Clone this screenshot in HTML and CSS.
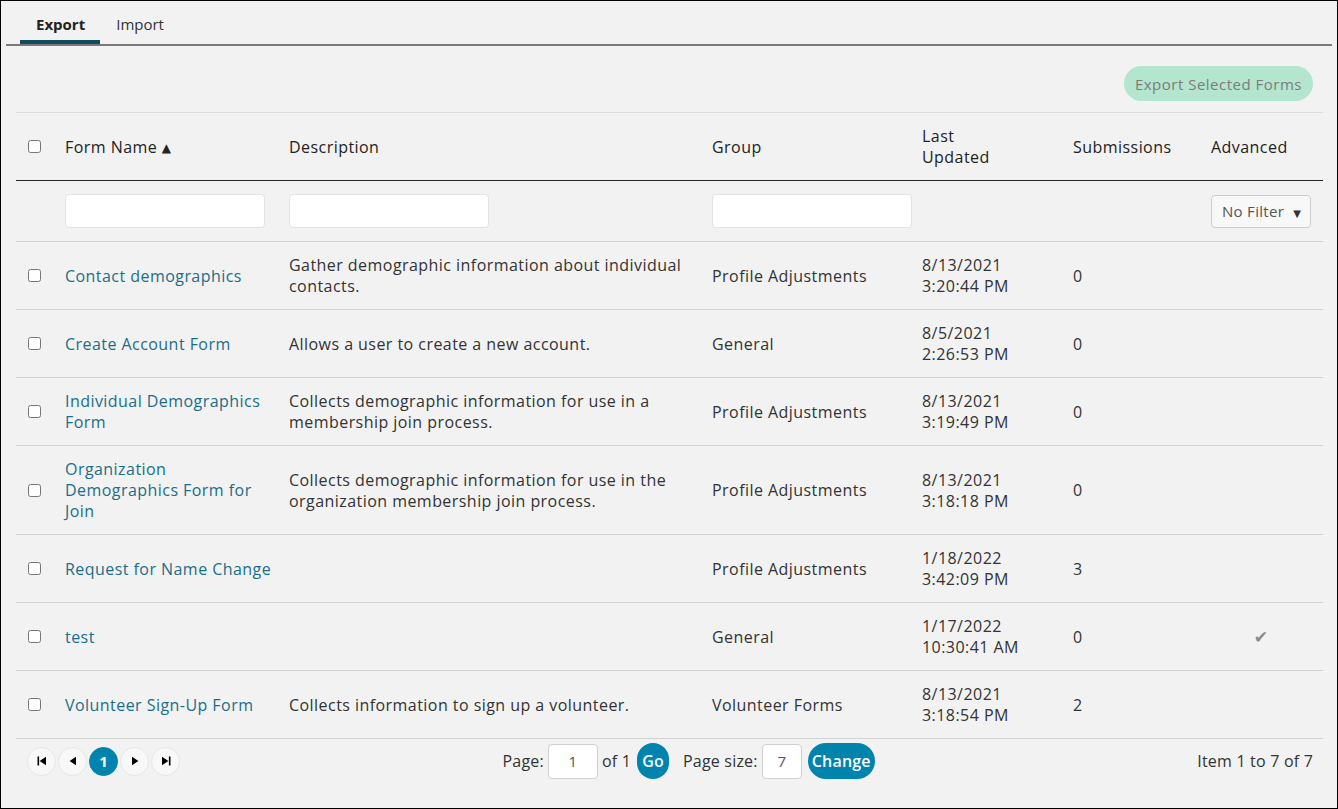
FILE: index.html
```html
<!DOCTYPE html>
<html lang="en">
<head>
    <meta charset="UTF-8">
    <meta name="viewport" content="width=device-width, initial-scale=1.0">
    <title>Forms - Export</title>
    <link rel="stylesheet" href="styles.css">
</head>
<body>
    <div class="panel">
        <div class="tabs">
            <a class="tab active" href="#">Export</a>
            <a class="tab" href="#">Import</a>
        </div>

        <div class="toolbar">
            <button class="export-button" disabled>Export Selected Forms</button>
        </div>

        <table class="grid">
            <colgroup>
                <col class="col-check">
                <col class="col-name">
                <col class="col-desc">
                <col class="col-group">
                <col class="col-updated">
                <col class="col-subs">
                <col class="col-adv">
            </colgroup>
            <thead>
                <tr class="head-row">
                    <th><input type="checkbox"></th>
                    <th>Form Name <span class="sort-arrow">&#9650;</span></th>
                    <th>Description</th>
                    <th>Group</th>
                    <th>Last<br>Updated</th>
                    <th>Submissions</th>
                    <th>Advanced</th>
                </tr>
                <tr class="filter-row">
                    <th></th>
                    <th><input type="text" class="filter-input"></th>
                    <th><input type="text" class="filter-input"></th>
                    <th><input type="text" class="filter-input"></th>
                    <th></th>
                    <th></th>
                    <th>
                        <div class="filter-select">No Filter <span class="caret">&#9660;</span></div>
                    </th>
                </tr>
            </thead>
            <tbody>
                <tr>
                    <td><input type="checkbox"></td>
                    <td><a href="#">Contact demographics</a></td>
                    <td>Gather demographic information about individual contacts.</td>
                    <td>Profile Adjustments</td>
                    <td>8/13/2021<br>3:20:44 PM</td>
                    <td>0</td>
                    <td></td>
                </tr>
                <tr>
                    <td><input type="checkbox"></td>
                    <td><a href="#">Create Account Form</a></td>
                    <td>Allows a user to create a new account.</td>
                    <td>General</td>
                    <td>8/5/2021<br>2:26:53 PM</td>
                    <td>0</td>
                    <td></td>
                </tr>
                <tr>
                    <td><input type="checkbox"></td>
                    <td><a href="#">Individual Demographics Form</a></td>
                    <td>Collects demographic information for use in a membership join process.</td>
                    <td>Profile Adjustments</td>
                    <td>8/13/2021<br>3:19:49 PM</td>
                    <td>0</td>
                    <td></td>
                </tr>
                <tr>
                    <td><input type="checkbox"></td>
                    <td><a href="#">Organization Demographics Form for Join</a></td>
                    <td>Collects demographic information for use in the organization membership join process.</td>
                    <td>Profile Adjustments</td>
                    <td>8/13/2021<br>3:18:18 PM</td>
                    <td>0</td>
                    <td></td>
                </tr>
                <tr>
                    <td><input type="checkbox"></td>
                    <td><a href="#">Request for Name Change</a></td>
                    <td></td>
                    <td>Profile Adjustments</td>
                    <td>1/18/2022<br>3:42:09 PM</td>
                    <td>3</td>
                    <td></td>
                </tr>
                <tr>
                    <td><input type="checkbox"></td>
                    <td><a href="#">test</a></td>
                    <td></td>
                    <td>General</td>
                    <td>1/17/2022<br>10:30:41 AM</td>
                    <td>0</td>
                    <td class="adv-cell"><span class="check">&#10004;</span></td>
                </tr>
                <tr>
                    <td><input type="checkbox"></td>
                    <td><a href="#">Volunteer Sign-Up Form</a></td>
                    <td>Collects information to sign up a volunteer.</td>
                    <td>Volunteer Forms</td>
                    <td>8/13/2021<br>3:18:54 PM</td>
                    <td>2</td>
                    <td></td>
                </tr>
            </tbody>
        </table>

        <div class="pager">
            <div class="pager-nav">
                <button class="page-btn" title="First">
                    <svg width="10" height="10" viewBox="0 0 10 10"><rect x="0.5" y="0.5" width="1.6" height="9" fill="#000"/><polygon points="9,0.8 9,9.2 2.6,5" fill="#000"/></svg>
                </button>
                <button class="page-btn" title="Previous">
                    <svg width="10" height="10" viewBox="0 0 10 10"><polygon points="8,0.8 8,9.2 1.6,5" fill="#000"/></svg>
                </button>
                <button class="page-btn current">1</button>
                <button class="page-btn" title="Next">
                    <svg width="10" height="10" viewBox="0 0 10 10"><polygon points="2,0.8 2,9.2 8.4,5" fill="#000"/></svg>
                </button>
                <button class="page-btn" title="Last">
                    <svg width="10" height="10" viewBox="0 0 10 10"><polygon points="1,0.8 1,9.2 7.4,5" fill="#000"/><rect x="7.9" y="0.5" width="1.6" height="9" fill="#000"/></svg>
                </button>
            </div>
            <div class="pager-jump">
                <span>Page:</span>
                <input type="text" class="page-input" value="1">
                <span>of 1</span>
                <button class="pill-button go">Go</button>
                <span class="size-label">Page size:</span>
                <input type="text" class="size-input" value="7">
                <button class="pill-button">Change</button>
            </div>
            <div class="pager-info">Item 1 to 7 of 7</div>
        </div>
    </div>
</body>
</html>
```

FILE: styles.css
```css
body {
    margin: 0;
    font-family: "Open Sans", "DejaVu Sans", sans-serif;
    font-size: 16px;
    letter-spacing: 0.45px;
    line-height: 21px;
    color: #333;
    background: #f2f2f2;
}
.panel {
    height: 807px;
    border: 1px solid #000;
    background: #f2f2f2;
}
.tabs {
    display: flex;
    margin: 0 5px;
    padding: 13px 0 0 14px;
    border-bottom: 2px solid #7b7b7b;
    font-size: 15px;
    letter-spacing: 0;
}
.tab {
    padding: 0 15px 5px 16px;
    border-bottom: 4px solid transparent;
    color: #333;
    text-decoration: none;
}
.tab.active {
    font-weight: bold;
    color: #222;
    border-bottom-color: #0d4d5f;
}
.toolbar {
    display: flex;
    justify-content: flex-end;
    margin: 0 24px 0 15px;
    padding: 20px 0 11px;
}
.export-button {
    height: 35px;
    padding: 0 11px;
    font-family: inherit;
    font-size: 15px;
    letter-spacing: 0.5px;
    color: #7c7c7c;
    background: #b3e5cf;
    border: none;
    border-radius: 18px;
}
.grid {
    width: 1307px;
    margin-left: 15px;
    border-collapse: collapse;
    table-layout: fixed;
    border-top: 1px solid #dcdcdc;
}
.col-check { width: 37px; }
.col-name { width: 224px; }
.col-desc { width: 423px; }
.col-group { width: 210px; }
.col-updated { width: 151px; }
.col-subs { width: 138px; }
.col-adv { width: 124px; }
th, td {
    padding: 13px 6px 12px 12px;
    text-align: left;
    vertical-align: middle;
}
th {
    font-weight: normal;
    color: #222;
}
th:first-child, td:first-child {
    padding: 0 0 0 12px;
}
th:nth-child(2), td:nth-child(2) {
    padding-right: 0;
}
input[type="checkbox"] {
    margin: 0;
    width: 13px;
    height: 13px;
    display: block;
}
.head-row th {
    border-bottom: 1px solid #222;
}
.sort-arrow {
    font-size: 12px;
    vertical-align: 1px;
}
.filter-row th {
    padding-top: 13px;
    padding-bottom: 13px;
}
.filter-input {
    display: block;
    box-sizing: border-box;
    width: 200px;
    height: 34px;
    background: #fff;
    border: 1px solid #e3e3e3;
    border-radius: 4px;
}
.filter-select {
    box-sizing: border-box;
    width: 100px;
    height: 33px;
    padding: 5px 10px;
    font-size: 15px;
    letter-spacing: 0.3px;
    color: #555;
    background: #f8f8f8;
    border: 1px solid #ccc;
    border-radius: 4px;
    white-space: nowrap;
}
.caret {
    font-size: 10px;
    margin-left: 5px;
    color: #333;
}
tbody td {
    border-top: 1px solid #d2d2d2;
}
tbody tr:last-child td {
    border-bottom: 1px solid #d2d2d2;
}
td a {
    color: #1a6e89;
    text-decoration: none;
}
.adv-cell {
    text-align: center;
    padding-left: 6px;
}
.check {
    color: #8a8a8a;
    font-size: 17px;
}
.pager {
    display: flex;
    justify-content: space-between;
    align-items: center;
    margin: 0 24px 0 26px;
    padding-top: 4px;
    letter-spacing: 0.2px;
}
.pager-nav {
    display: flex;
    gap: 2px;
}
.page-btn {
    display: flex;
    align-items: center;
    justify-content: center;
    width: 29px;
    height: 29px;
    padding: 0;
    background: #f8f8f8;
    border: 1px solid #e6e6e6;
    border-radius: 50%;
    font-family: inherit;
    font-size: 15px;
}
.page-btn.current {
    background: #0083ad;
    border-color: #0083ad;
    color: #fff;
    font-weight: bold;
}
.pager-jump {
    display: flex;
    align-items: center;
}
.page-input, .size-input {
    box-sizing: border-box;
    height: 35px;
    margin: 0 4px;
    text-align: center;
    font-family: inherit;
    font-size: 15px;
    color: #555;
    background: #fff;
    border: 1px solid #d0d0d0;
    border-radius: 4px;
}
.page-input { width: 50px; }
.size-input { width: 40px; }
.pill-button {
    height: 36px;
    margin-left: 2px;
    padding: 0 4px;
    font-family: inherit;
    font-size: 16px;
    font-weight: 600;
    letter-spacing: 0.2px;
    color: #fff;
    background: #0083ad;
    border: none;
    border-radius: 18px;
}
.pill-button.go {
    margin-left: 6px;
    width: 32px;
    padding: 0;
}
.size-label {
    margin-left: 14px;
}
.pager-info {
    color: #333;
}
```
